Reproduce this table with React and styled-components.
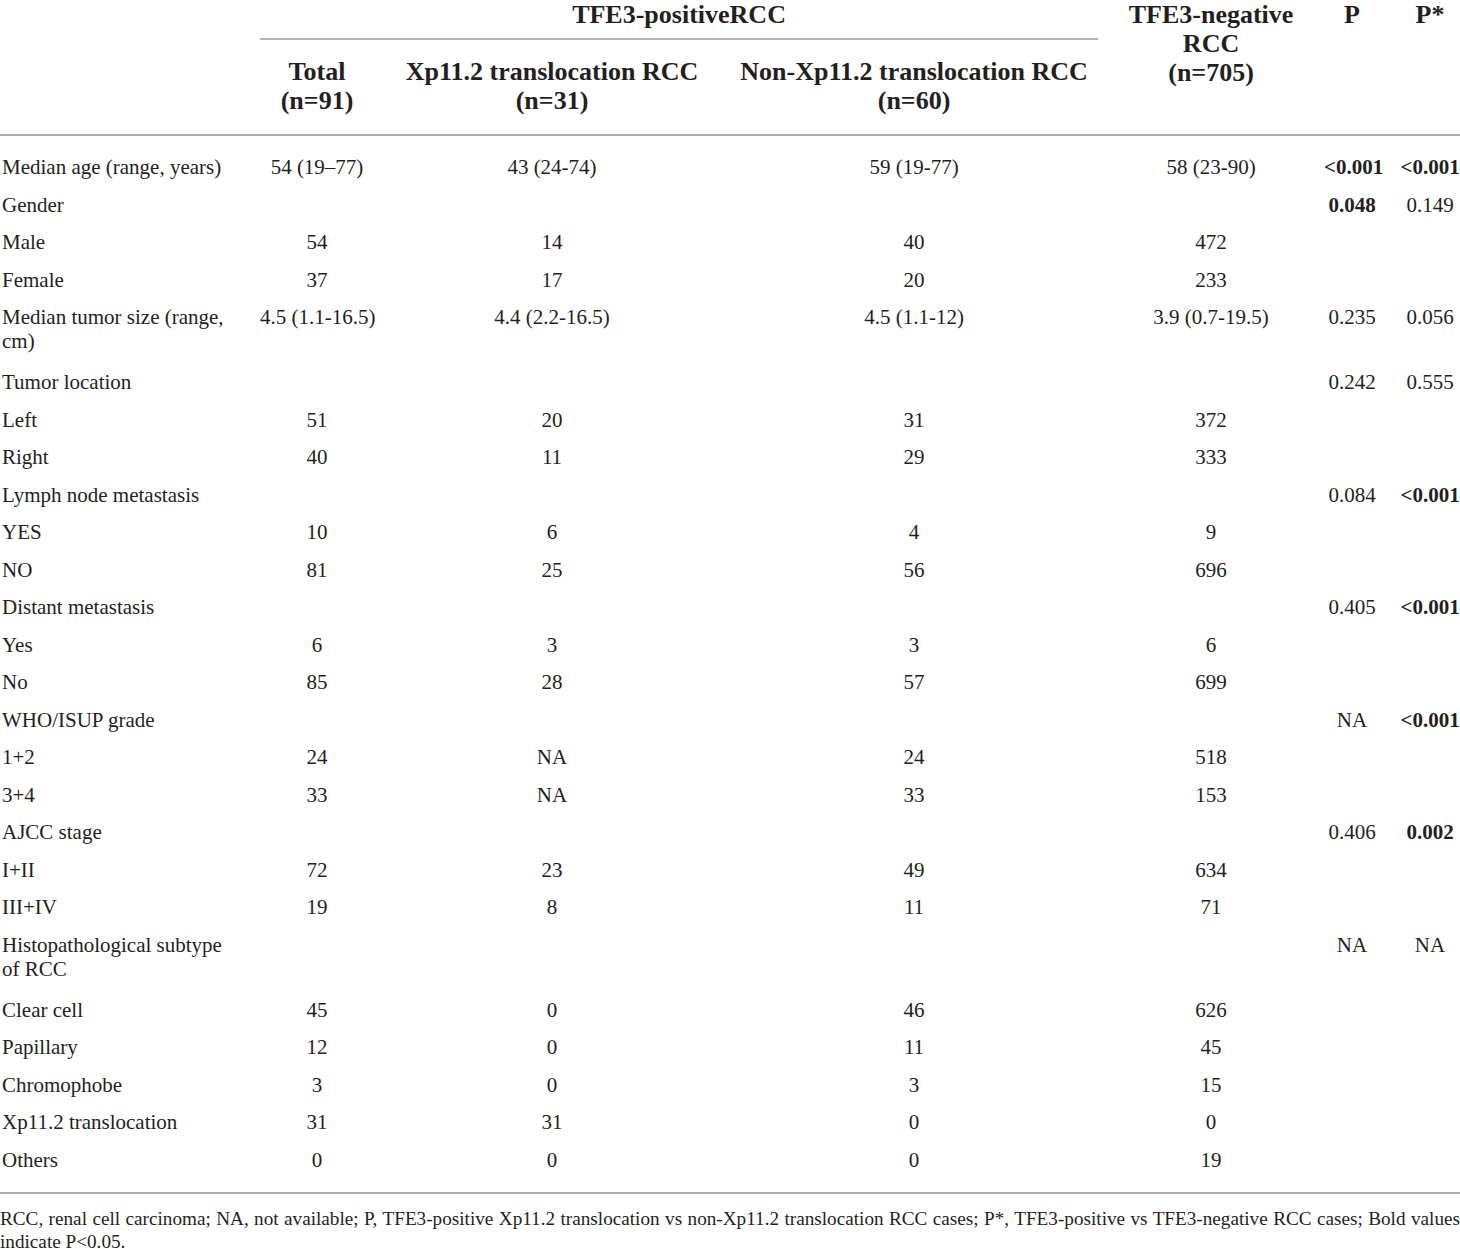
import styled, { createGlobalStyle } from "styled-components";

const GlobalStyle = createGlobalStyle`
  body {
    margin: 0;
    background: #fff;
    color: #231f20;
    font-family: "Liberation Serif", "Times New Roman", serif;
  }
`;

const Page = styled.div`
  width: 1460px;
`;

const Table = styled.table`
  width: 1460px;
  table-layout: fixed;
  border-collapse: collapse;
  border-bottom: 2px solid #ababab;

  tbody tr:first-child td {
    padding-top: 19px;
  }
  tbody tr:last-child td {
    padding-bottom: 20px;
  }
`;

const Head = styled.thead`
  border-bottom: 2px solid #ababab;
`;

const HeadCell = styled.th`
  font-size: 26px;
  font-weight: 700;
  line-height: 29px;
  text-align: center;
  vertical-align: top;
  white-space: nowrap;
  padding: ${(p) => (p.$second ? "17px 0 19px" : "0 0 9px")};
  padding-left: ${(p) => (p.$shift ? "20px" : "0")};
  border-bottom: ${(p) => (p.$rule ? "2px solid #b4b4b4" : "none")};
`;

const Cell = styled.td`
  font-size: 21px;
  line-height: 24px;
  font-weight: ${(p) => (p.$bold ? 700 : 400)};
  text-align: center;
  vertical-align: top;
  white-space: nowrap;
  padding: 6.75px 0 ${(p) => (p.$tall ? "10.25px" : "6.75px")};
  padding-left: ${(p) => (p.$shift ? "20px" : "0")};
`;

const LabelCell = styled(Cell)`
  text-align: left;
  white-space: normal;
  padding-left: 2px;
  padding-right: 23px;
`;

const Footnote = styled.p`
  margin: 0;
  padding-top: 13px;
  font-size: 19.2px;
  line-height: 23px;
  text-align: justify;
`;

const b = (v) => ({ v, bold: true });

const rows = [
  ["Median age (range, years)", "54 (19–77)", "43 (24-74)", "59 (19-77)", "58 (23-90)", b("<0.001"), b("<0.001")],
  ["Gender", "", "", "", "", b("0.048"), "0.149"],
  ["Male", "54", "14", "40", "472", "", ""],
  ["Female", "37", "17", "20", "233", "", ""],
  ["Median tumor size (range, cm)", "4.5 (1.1-16.5)", "4.4 (2.2-16.5)", "4.5 (1.1-12)", "3.9 (0.7-19.5)", "0.235", "0.056", true],
  ["Tumor location", "", "", "", "", "0.242", "0.555"],
  ["Left", "51", "20", "31", "372", "", ""],
  ["Right", "40", "11", "29", "333", "", ""],
  ["Lymph node metastasis", "", "", "", "", "0.084", b("<0.001")],
  ["YES", "10", "6", "4", "9", "", ""],
  ["NO", "81", "25", "56", "696", "", ""],
  ["Distant metastasis", "", "", "", "", "0.405", b("<0.001")],
  ["Yes", "6", "3", "3", "6", "", ""],
  ["No", "85", "28", "57", "699", "", ""],
  ["WHO/ISUP grade", "", "", "", "", "NA", b("<0.001")],
  ["1+2", "24", "NA", "24", "518", "", ""],
  ["3+4", "33", "NA", "33", "153", "", ""],
  ["AJCC stage", "", "", "", "", "0.406", b("0.002")],
  ["I+II", "72", "23", "49", "634", "", ""],
  ["III+IV", "19", "8", "11", "71", "", ""],
  ["Histopathological subtype of RCC", "", "", "", "", "NA", "NA", true],
  ["Clear cell", "45", "0", "46", "626", "", ""],
  ["Papillary", "12", "0", "11", "45", "", ""],
  ["Chromophobe", "3", "0", "3", "15", "", ""],
  ["Xp11.2 translocation", "31", "31", "0", "0", "", ""],
  ["Others", "0", "0", "0", "19", "", ""],
];

const widths = [260, 114, 356, 368, 226, 56, 80];

const App = () => {
  return (
    <Page>
      <GlobalStyle />
      <Table>
        <colgroup>
          {widths.map((w, i) => (
            <col key={i} style={{ width: w }} />
          ))}
        </colgroup>
        <Head>
          <tr>
            <HeadCell rowSpan={2} />
            <HeadCell colSpan={3} $rule>
              TFE3-positiveRCC
            </HeadCell>
            <HeadCell rowSpan={2}>
              TFE3-negative
              <br />
              RCC
              <br />
              (n=705)
            </HeadCell>
            <HeadCell rowSpan={2}>P</HeadCell>
            <HeadCell rowSpan={2} $shift>
              P*
            </HeadCell>
          </tr>
          <tr>
            <HeadCell $second>
              Total
              <br />
              (n=91)
            </HeadCell>
            <HeadCell $second>
              Xp11.2 translocation RCC
              <br />
              (n=31)
            </HeadCell>
            <HeadCell $second>
              Non-Xp11.2 translocation RCC
              <br />
              (n=60)
            </HeadCell>
          </tr>
        </Head>
        <tbody>
          {rows.map(([label, ...rest]) => {
            const tall = rest[6] === true;
            const vals = rest.slice(0, 6);
            return (
              <tr key={label}>
                <LabelCell $tall={tall}>{label}</LabelCell>
                {vals.map((v, i) => {
                  const bold = typeof v === "object";
                  return (
                    <Cell key={i} $bold={bold} $tall={tall} $shift={i === 5}>
                      {bold ? v.v : v}
                    </Cell>
                  );
                })}
              </tr>
            );
          })}
        </tbody>
      </Table>
      <Footnote>
        RCC, renal cell carcinoma; NA, not available; P, TFE3-positive Xp11.2
        translocation vs non-Xp11.2 translocation RCC cases; P*, TFE3-positive
        vs TFE3-negative RCC cases; Bold values indicate P&lt;0.05.
      </Footnote>
    </Page>
  );
};

export default App;
